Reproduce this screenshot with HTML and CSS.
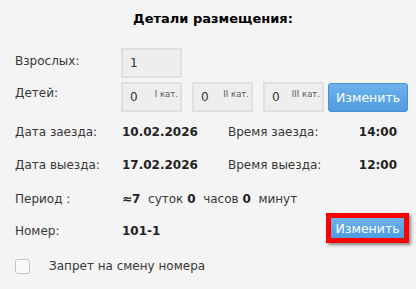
FILE: index.html
```
<!DOCTYPE html>
<html lang="ru">
<head>
<meta charset="utf-8">
<link rel="stylesheet" href="styles.css">
</head>
<body>
<div class="panel">
  <div class="title">Детали размещения:</div>

  <div class="row row-adults">
    <div class="lbl lbl-adults">Взрослых:</div>
    <div class="inp"><span class="val">1</span></div>
  </div>

  <div class="row row-kids">
    <div class="lbl lbl-kids">Детей:</div>
    <div class="inp"><span class="val">0</span><span class="cat">I кат.</span></div>
    <div class="inp"><span class="val">0</span><span class="cat">II кат.</span></div>
    <div class="inp"><span class="val">0</span><span class="cat">III кат.</span></div>
    <button class="btn btn-kids">Изменить</button>
  </div>

  <div class="row line row-d1">
    <div class="lbl">Дата заезда:</div>
    <div class="value">10.02.2026</div>
    <div class="lbl2">Время заезда:</div>
    <div class="time">14:00</div>
  </div>

  <div class="row line row-d2">
    <div class="lbl">Дата выезда:</div>
    <div class="value">17.02.2026</div>
    <div class="lbl2">Время выезда:</div>
    <div class="time">12:00</div>
  </div>

  <div class="row line row-period">
    <div class="lbl">Период :</div>
    <div class="period"><b>≈7</b>&nbsp; суток <b>0</b>&nbsp; часов <b>0</b>&nbsp; минут</div>
  </div>

  <div class="row row-room">
    <div class="lbl lbl-room">Номер:</div>
    <div class="value value-room">101-1</div>
    <button class="btn btn-room">Изменить</button>
  </div>

  <div class="row row-check">
    <span class="check"></span>
    <span class="check-text">Запрет на смену номера</span>
  </div>
</div>
</body>
</html>
```
FILE: styles.css
```
* { box-sizing: border-box; }
html, body { margin: 0; padding: 0; }
body {
  background: #f4f4f4;
  font-family: "DejaVu Sans", Verdana, sans-serif;
  font-size: 12px;
  color: #333;
  width: 416px;
  height: 289px;
  overflow: hidden;
}
.panel { padding-left: 15px; }
.title {
  padding-top: 11px;
  height: 27px;
  line-height: 16px;
  font-weight: bold;
  font-size: 13px;
  color: #000;
  text-align: center;
  padding-left: 5px;
  padding-right: 10px;
}
.row { display: flex; align-items: flex-start; }
.row-adults { margin-top: 21px; height: 30px; }
.row-kids { margin-top: 4px; height: 30px; }
.lbl { width: 106px; line-height: 20px; color: #383838; }
.lbl-adults { padding-top: 3px; }
.lbl-kids { padding-top: 1px; }
.inp {
  position: relative;
  width: 61px;
  height: 30px;
  margin-right: 10px;
  background: #eeeeee;
  border: 2px solid #e0e0e0;
  padding-left: 7px;
  line-height: 27px;
  color: #2b3440;
}
.inp .val { font-size: 12px; }
.cat {
  position: absolute;
  right: 2px;
  top: 5px;
  font-family: "DejaVu Sans", Verdana, sans-serif;
  font-size: 8.5px;
  line-height: 11px;
  color: #5a5a5a;
}
.btn {
  font-family: "DejaVu Sans", Verdana, sans-serif;
  font-size: 12.5px;
  color: #fff;
  background: linear-gradient(#6cb2ec, #4e9ce0);
  border: 1px solid #4a8fd2;
  border-radius: 3px;
  padding: 0;
  cursor: pointer;
}
.btn-kids {
  margin-left: -6px;
  margin-top: 1px;
  width: 80px;
  height: 29px;
}
.line { line-height: 20px; height: 20px; }
.row-d1 { margin-top: 10px; }
.row-d2 { margin-top: 13px; }
.row-period { margin-top: 14px; }
.line .lbl { width: 107px; }
.value { width: 106px; font-weight: bold; color: #222; }
.lbl2 { width: 130px; color: #383838; }
.time { width: 39px; font-weight: bold; color: #222; text-align: right; }
.period { color: #383838; }
.period b { color: #222; }
.row-room { margin-top: 4px; height: 30px; }
.lbl-room { width: 107px; padding-top: 8px; }
.value-room { line-height: 20px; padding-top: 8px; width: 204px; }
.btn-room {
  width: 83px;
  height: 30px;
  border: 5px solid #ff0000;
  border-radius: 0;
  box-shadow: 2px 2px 3px rgba(0, 0, 0, 0.45);
  background: linear-gradient(#6cb2ec, #4e9ce0);
}
.row-check { margin-top: 16px; align-items: center; height: 15px; }
.check {
  width: 15px;
  height: 15px;
  border: 1px solid #c4c4c4;
  border-radius: 3px;
  background: #fafafa;
}
.check-text { margin-left: 19px; color: #383838; line-height: 15px; }
```
